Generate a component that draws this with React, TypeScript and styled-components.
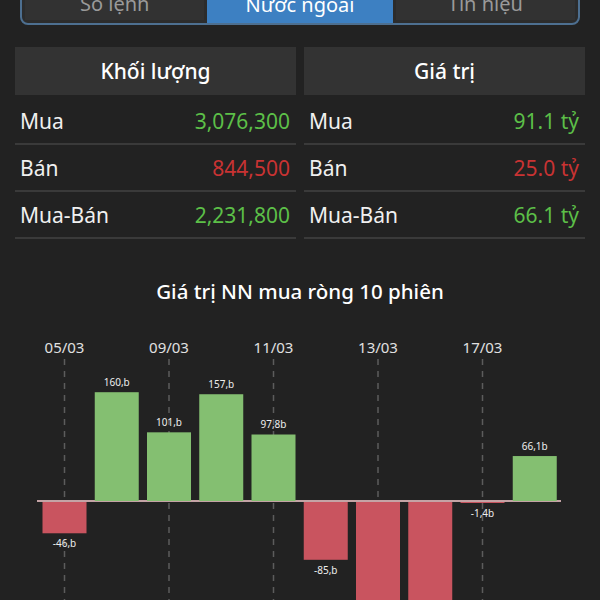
import React from "react";
import styled, { createGlobalStyle } from "styled-components";

const Global = createGlobalStyle`
  html, body { margin: 0; padding: 0; background: #222222; }
  body { font-family: "Noto Sans", "Liberation Sans", sans-serif; color: #f2f2f2; overflow: hidden; }
`;

const Page = styled.div`
  width: 600px;
  height: 600px;
  overflow: hidden;
  background: #222222;
`;

const Tabs = styled.div`
  margin: -16px 20px 0;
  height: 41px;
  display: grid;
  grid-template-columns: 1fr 1fr 1fr;
  border: 2px solid #4d6f90;
  border-radius: 8px;
  overflow: hidden;
  box-sizing: border-box;
  background: #2c2c2c;
`;

const Tab = styled.div<{ $active?: boolean }>`
  display: flex;
  align-items: center;
  justify-content: center;
  font-size: 20px;
  color: ${(p) => (p.$active ? "#ffffff" : "#9a9a9a")};
  background: ${(p) => (p.$active ? "#3d80c2" : "#323232")};
  margin: ${(p) => (p.$active ? "0" : "0 3px 3px")};
`;

const Tables = styled.div`
  margin: 22px 15px 0;
  display: grid;
  grid-template-columns: 1fr 1fr;
  column-gap: 8px;
`;

const Column = styled.div`
  display: flex;
  flex-direction: column;
`;

const HeadCell = styled.div`
  height: 48px;
  margin-bottom: 3px;
  background: #333333;
  display: flex;
  align-items: center;
  justify-content: center;
  font-size: 21px;
  font-weight: 500;
  color: #ffffff;
`;

const Row = styled.div`
  height: 45px;
  border-bottom: 2px solid #3a3a3a;
  display: flex;
  align-items: center;
  justify-content: space-between;
  padding: 0 6px 0 5px;
  font-size: 21px;
`;

const Label = styled.span`
  color: #f0f0f0;
`;

const Value = styled.span<{ $tone: "up" | "down" }>`
  color: ${(p) => (p.$tone === "up" ? "#5cbf48" : "#c93333")};
`;

const ChartTitle = styled.div`
  margin-top: 38px;
  height: 28px;
  display: flex;
  align-items: center;
  justify-content: center;
  font-size: 20.5px;
  font-weight: 500;
  color: #ffffff;
`;

const ChartSvg = styled.svg`
  display: block;
  margin-top: 6px;
`;

type Item = { label: string; value: string; tone: "up" | "down" };

const volume: Item[] = [
  { label: "Mua", value: "3,076,300", tone: "up" },
  { label: "Bán", value: "844,500", tone: "down" },
  { label: "Mua-Bán", value: "2,231,800", tone: "up" },
];

const valueRows: Item[] = [
  { label: "Mua", value: "91.1 tỷ", tone: "up" },
  { label: "Bán", value: "25.0 tỷ", tone: "down" },
  { label: "Mua-Bán", value: "66.1 tỷ", tone: "up" },
];

const bars = [
  { v: -46, t: "-46,b" },
  { v: 160, t: "160,b" },
  { v: 101, t: "101,b" },
  { v: 157, t: "157,b" },
  { v: 97.8, t: "97,8b" },
  { v: -85, t: "-85,b" },
  { v: -230, t: "-230,b" },
  { v: -215, t: "-215,b" },
  { v: -1.4, t: "-1,4b" },
  { v: 66.1, t: "66,1b" },
];

const dates = [
  { i: 0, t: "05/03" },
  { i: 2, t: "09/03" },
  { i: 4, t: "11/03" },
  { i: 6, t: "13/03" },
  { i: 8, t: "17/03" },
];

const ZERO = 190;
const SCALE = 0.68;
const BAR_W = 44;
const barX = (i: number) => 42.5 + i * 52.25;

function Chart() {
  return (
    <ChartSvg width={600} height={290} viewBox="0 0 600 290">
      {dates.map((d) => {
        const cx = barX(d.i) + BAR_W / 2;
        return (
          <g key={d.t}>
            <line x1={cx} y1={48} x2={cx} y2={300} stroke="#5c5c5c" strokeWidth={1.5} strokeDasharray="6 6" />
            <text x={cx} y={42} textAnchor="middle" fontSize={15} fill="#e0e0e0" fontFamily="Noto Sans, sans-serif">
              {d.t}
            </text>
          </g>
        );
      })}
      <line x1={37} y1={ZERO} x2={561} y2={ZERO} stroke="#c4a3a5" strokeWidth={2} />
      {bars.map((b, i) => {
        const h = Math.max(Math.abs(b.v) * SCALE, 1);
        const x = barX(i);
        const up = b.v >= 0;
        const y = up ? ZERO - h : ZERO + 1;
        const ly = up ? y - 6 : y + h + 14;
        return (
          <g key={i}>
            <rect x={x} y={y} width={BAR_W} height={h} fill={up ? "#84bf71" : "#c9545f"} />
            <text x={x + BAR_W / 2} y={ly} textAnchor="middle" fontSize={10} fill="#eeeeee" fontFamily="Noto Sans, sans-serif">
              {b.t}
            </text>
          </g>
        );
      })}
    </ChartSvg>
  );
}

export default function App() {
  return (
    <Page>
      <Global />
      <Tabs>
        <Tab>Sổ lệnh</Tab>
        <Tab $active>Nước ngoài</Tab>
        <Tab>Tín hiệu</Tab>
      </Tabs>
      <Tables>
        <Column>
          <HeadCell>Khối lượng</HeadCell>
          {volume.map((r) => (
            <Row key={r.label}>
              <Label>{r.label}</Label>
              <Value $tone={r.tone}>{r.value}</Value>
            </Row>
          ))}
        </Column>
        <Column>
          <HeadCell>Giá trị</HeadCell>
          {valueRows.map((r) => (
            <Row key={r.label}>
              <Label>{r.label}</Label>
              <Value $tone={r.tone}>{r.value}</Value>
            </Row>
          ))}
        </Column>
      </Tables>
      <ChartTitle>Giá trị NN mua ròng 10 phiên</ChartTitle>
      <Chart />
    </Page>
  );
}
